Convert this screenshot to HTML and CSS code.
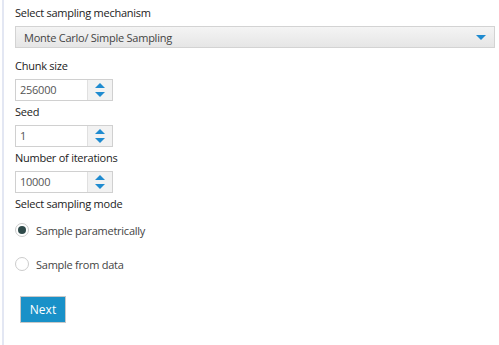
FILE: index.html
```html
<!DOCTYPE html>
<html lang="en">
<head>
    <meta charset="UTF-8">
    <meta name="viewport" content="width=device-width, initial-scale=1.0">
    <title>Sampling settings</title>
    <link rel="stylesheet" href="styles.css">
</head>
<body>
    <div class="panel">
        <form class="wizard" action="#" method="post">

            <label class="field-label">Select sampling mechanism</label>
            <div class="dropdown">
                <span class="dropdown-text">Monte Carlo/ Simple Sampling</span>
                <svg class="dropdown-arrow" width="10" height="7" viewBox="0 0 10 7">
                    <polygon points="0,1 10,1 5,6" fill="#1f8bd0"/>
                </svg>
            </div>

            <label class="field-label">Chunk size</label>
            <div class="spinner">
                <span class="spinner-value">256000</span>
                <span class="spinner-buttons">
                    <svg width="10" height="6" viewBox="0 0 10 6"><polygon points="5,0 10,5 0,5" fill="#1f8bd0"/></svg>
                    <svg width="10" height="6" viewBox="0 0 10 6"><polygon points="0,1 10,1 5,6" fill="#1f8bd0"/></svg>
                </span>
            </div>

            <label class="field-label">Seed</label>
            <div class="spinner">
                <span class="spinner-value">1</span>
                <span class="spinner-buttons">
                    <svg width="10" height="6" viewBox="0 0 10 6"><polygon points="5,0 10,5 0,5" fill="#1f8bd0"/></svg>
                    <svg width="10" height="6" viewBox="0 0 10 6"><polygon points="0,1 10,1 5,6" fill="#1f8bd0"/></svg>
                </span>
            </div>

            <label class="field-label">Number of iterations</label>
            <div class="spinner">
                <span class="spinner-value">10000</span>
                <span class="spinner-buttons">
                    <svg width="10" height="6" viewBox="0 0 10 6"><polygon points="5,0 10,5 0,5" fill="#1f8bd0"/></svg>
                    <svg width="10" height="6" viewBox="0 0 10 6"><polygon points="0,1 10,1 5,6" fill="#1f8bd0"/></svg>
                </span>
            </div>

            <label class="field-label">Select sampling mode</label>
            <ul class="radio-list">
                <li class="radio-row"><span class="radio checked"></span> Sample parametrically</li>
                <li class="radio-row"><span class="radio"></span> Sample from data</li>
            </ul>

            <button type="button" class="btn-next">Next</button>
        </form>
    </div>
</body>
</html>
```

FILE: styles.css
```css
/* Reset */
body, ul, li {
    margin: 0;
    padding: 0;
}

body {
    font-family: "Open Sans", Arial, sans-serif;
    font-size: 11px;
    letter-spacing: -0.25px;
    color: #222;
    background-color: #fff;
}

.panel {
    margin-left: 2px;
    min-height: 345px;
    border-left: 2px solid #e3e7f3;
    box-sizing: border-box;
}

.wizard {
    display: flex;
    flex-direction: column;
    align-items: flex-start;
    padding: 5px 4px 0 11px;
}

.field-label {
    display: block;
    line-height: 16px;
    margin-bottom: 5px;
}

/* Desplegable */
.dropdown {
    align-self: stretch;
    display: flex;
    align-items: center;
    justify-content: space-between;
    height: 22px;
    padding: 0 8px 0 8px;
    margin-bottom: 10px;
    border: 1px solid #d3d3d3;
    background: linear-gradient(#f4f4f4, #e6e6e6);
    box-sizing: border-box;
    color: #444;
}

/* Campos numéricos */
.spinner {
    display: flex;
    width: 98px;
    height: 22px;
    margin-bottom: 3px;
    border: 1px solid #d0d0d0;
    box-sizing: border-box;
}

.spinner-value {
    flex: 1;
    padding-left: 4px;
    line-height: 20px;
    color: #555;
}

.spinner-buttons {
    width: 24px;
    display: flex;
    flex-direction: column;
    align-items: center;
    justify-content: center;
    gap: 2px;
    background-color: #f2f2f2;
    border-left: 1px solid #e0e0e0;
}

.spinner-buttons svg {
    display: block;
}

/* Radios */
.radio-list {
    list-style: none;
    margin-top: 3px;
}

.radio-row {
    display: flex;
    align-items: center;
    gap: 7px;
    height: 20px;
    margin-bottom: 14px;
    color: #444;
}

.radio {
    width: 14px;
    height: 14px;
    border: 1px solid #ccc;
    border-radius: 50%;
    box-sizing: border-box;
    display: flex;
    align-items: center;
    justify-content: center;
    background-color: #fff;
}

.radio.checked::after {
    content: "";
    width: 8px;
    height: 8px;
    border-radius: 50%;
    background-color: #2f4b4b;
}

.btn-next {
    margin-top: 8px;
    margin-left: 5px;
    width: 46px;
    height: 27px;
    border: 1px solid #c8c8c8;
    background-color: #1991c8;
    color: #fff;
    font-family: "Open Sans", Arial, sans-serif;
    font-size: 12px;
    cursor: pointer;
}
```
